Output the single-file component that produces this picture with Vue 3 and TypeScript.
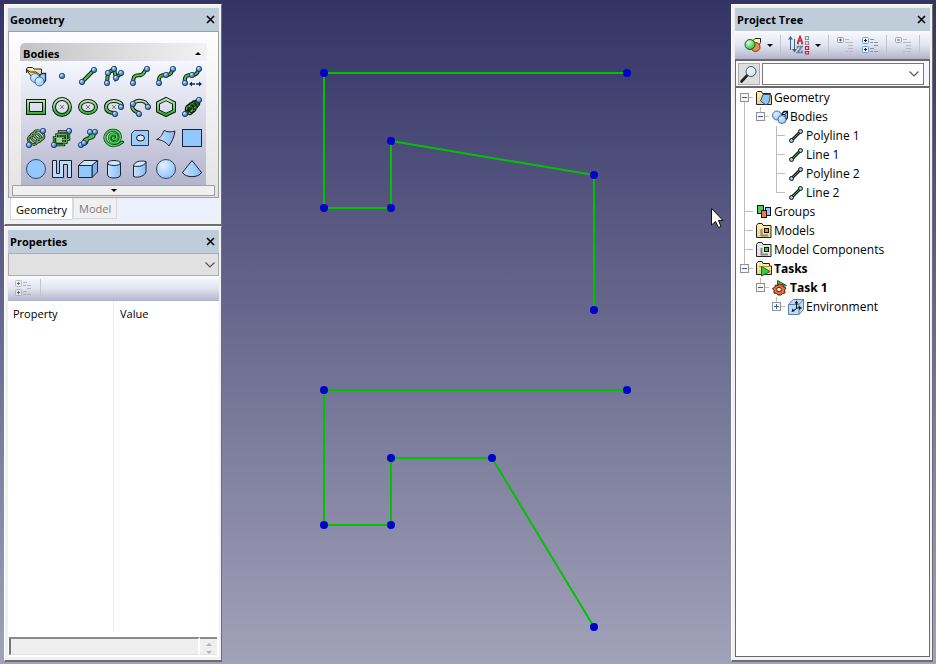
<script setup lang="ts">
import { ref, computed } from 'vue'

interface Tool { id: string; label: string }
interface TreeRow {
  label: string
  icon: string
  cells: string[]
  toggle?: '+' | '-'
  bold?: boolean
}
interface Point { x: number; y: number }

const tools: Tool[] = [
  { id: 'import', label: 'Import bodies' },
  { id: 'point', label: 'Point' },
  { id: 'line', label: 'Line' },
  { id: 'polyline', label: 'Polyline' },
  { id: 'curve', label: 'Curve' },
  { id: 'spline', label: 'Spline' },
  { id: 'spline-len', label: 'Spline by length' },
  { id: 'rect-wire', label: 'Rectangle wire' },
  { id: 'circle-wire', label: 'Circle wire' },
  { id: 'ellipse-wire', label: 'Ellipse wire' },
  { id: 'arc', label: 'Arc' },
  { id: 'arc3', label: 'Three point arc' },
  { id: 'hexagon', label: 'Polygon' },
  { id: 'coil-dark', label: 'Conical helix' },
  { id: 'coil', label: 'Helix' },
  { id: 'coil-rect', label: 'Rectangular helix' },
  { id: 'twist', label: 'Twisted wires' },
  { id: 'spiral', label: 'Spiral' },
  { id: 'plate', label: 'Plate with hole' },
  { id: 'surface', label: 'Surface' },
  { id: 'rect', label: 'Rectangle' },
  { id: 'disc', label: 'Disc' },
  { id: 'meander', label: 'Meander' },
  { id: 'box', label: 'Box' },
  { id: 'cylinder', label: 'Cylinder' },
  { id: 'oblique', label: 'Oblique cylinder' },
  { id: 'sphere', label: 'Sphere' },
  { id: 'cone', label: 'Cone' },
]

const rows: TreeRow[] = [
  { label: 'Geometry', icon: 't-geometry', cells: ['down'], toggle: '-' },
  { label: 'Bodies', icon: 't-bodies', cells: ['line', 'up'], toggle: '-' },
  { label: 'Polyline 1', icon: 't-line', cells: ['line', 'none', 'tee'] },
  { label: 'Line 1', icon: 't-line', cells: ['line', 'none', 'tee'] },
  { label: 'Polyline 2', icon: 't-line', cells: ['line', 'none', 'tee'] },
  { label: 'Line 2', icon: 't-line', cells: ['line', 'none', 'up'] },
  { label: 'Groups', icon: 't-groups', cells: ['tee'] },
  { label: 'Models', icon: 't-models', cells: ['tee'] },
  { label: 'Model Components', icon: 't-components', cells: ['tee'] },
  { label: 'Tasks', icon: 't-tasks', cells: ['up'], toggle: '-', bold: true },
  { label: 'Task 1', icon: 't-task', cells: ['none', 'up'], toggle: '-', bold: true },
  { label: 'Environment', icon: 't-env', cells: ['none', 'none', 'up'], toggle: '+' },
]

const bodies: Point[][] = [
  [
    { x: 627, y: 73 }, { x: 324, y: 73 }, { x: 324, y: 208 }, { x: 391, y: 208 },
    { x: 391, y: 141 }, { x: 594, y: 175 }, { x: 594, y: 310 },
  ],
  [
    { x: 627, y: 390 }, { x: 324, y: 390 }, { x: 324, y: 525 }, { x: 391, y: 525 },
    { x: 391, y: 458 }, { x: 492, y: 458 }, { x: 594, y: 627 },
  ],
]
const paths = computed(() => bodies.map(b => b.map(p => `${p.x},${p.y}`).join(' ')))
const nodes = computed(() => bodies.flat())

const tab = ref<'Geometry' | 'Model'>('Geometry')
const search = ref('')
</script>

<template>
  <div class="app">
    <svg class="sprite" width="0" height="0" aria-hidden="true">
      <defs>
        <radialGradient id="ball" cx=".35" cy=".3" r=".7">
          <stop offset="0" stop-color="#dcebff" /><stop offset=".5" stop-color="#6ba2e0" /><stop offset="1" stop-color="#2b5fa8" />
        </radialGradient>
        <radialGradient id="sph" cx=".35" cy=".3" r=".75">
          <stop offset="0" stop-color="#e2f1ff" /><stop offset="1" stop-color="#8cc3fb" />
        </radialGradient>
        <radialGradient id="gball" cx=".35" cy=".3" r=".7">
          <stop offset="0" stop-color="#d8ffd8" /><stop offset="1" stop-color="#2fc43c" />
        </radialGradient>
        <linearGradient id="green" gradientUnits="userSpaceOnUse" x1="0" y1="2" x2="0" y2="20">
          <stop offset="0" stop-color="#d2efcf" /><stop offset="1" stop-color="#12ae12" />
        </linearGradient>
        <linearGradient id="blue" x1="0" y1="0" x2="1" y2="0">
          <stop offset="0" stop-color="#c8e2ff" /><stop offset="1" stop-color="#86bdf7" />
        </linearGradient>
        <linearGradient id="folder" x1="0" y1="0" x2="0" y2="1">
          <stop offset="0" stop-color="#fff2b4" /><stop offset="1" stop-color="#f3cf72" />
        </linearGradient>
        <circle id="b" r="2.700" fill="url(#ball)" stroke="#16335e" stroke-width=".8" />
        <path id="x" d="M-2-2 2 2M2-2-2 2" stroke="#777" fill="none" />
      </defs>

      <symbol id="import" viewBox="0 0 22 22">
        <path d="M1.500 8V3.500L3 2.500h4.500L9 4h7.500v5" fill="url(#folder)" stroke="#222" />
        <path d="M1.500 4.500 5.500 10.500h10L11 7H5.500z" fill="url(#folder)" stroke="#222" />
        <path d="M14.500 10.500 17 8.500h3.500v7L18.500 18h-4z" fill="#a6d0fb" stroke="#17365d" stroke-width="1.400" />
        <circle cx="10" cy="13" r="4.500" fill="url(#sph)" stroke="#4f7fb4" />
        <circle cx="14.500" cy="16.500" r="4.500" fill="url(#sph)" stroke="#3f6ca0" />
      </symbol>
      <symbol id="point" viewBox="0 0 22 22"><use href="#b" x="11" y="11" /></symbol>
      <symbol id="line" viewBox="0 0 22 22">
        <path class="k" d="M5 17 17 5" /><path class="g" d="M5 17 17 5" />
        <use href="#b" x="5" y="17" /><use href="#b" x="17" y="5" />
      </symbol>
      <symbol id="polyline" viewBox="0 0 22 22">
        <path class="k" d="M4 17 5 8 11 4 13 13 19 7" /><path class="g" d="M4 17 5 8 11 4 13 13 19 7" />
        <use href="#b" x="4" y="18" /><use href="#b" x="5" y="8" /><use href="#b" x="11" y="4" /><use href="#b" x="13" y="13" /><use href="#b" x="18" y="8" />
      </symbol>
      <symbol id="curve" viewBox="0 0 22 22">
        <path class="k" d="M4 18C4 8 9 11 12 10 16 9 15 5 18 4" /><path class="g" d="M4 18C4 8 9 11 12 10 16 9 15 5 18 4" />
        <use href="#b" x="4" y="18" /><use href="#b" x="18" y="4" />
      </symbol>
      <symbol id="spline" viewBox="0 0 22 22">
        <path class="k" d="M4 18C3 10 7 10 11 10S17 9 17 4" /><path class="g" d="M4 18C3 10 7 10 11 10S17 9 17 4" />
        <use href="#b" x="4" y="18" /><use href="#b" x="11" y="10" /><use href="#b" x="18" y="4" />
      </symbol>
      <symbol id="spline-len" viewBox="0 0 22 22">
        <path class="k" d="M4 17C3 10 7 10 11 10S17 9 17 4" /><path class="g" d="M4 17C3 10 7 10 11 10S17 9 17 4" />
        <use href="#b" x="4" y="18" /><use href="#b" x="11" y="10" /><use href="#b" x="18" y="4" />
        <path d="M11 19h7" stroke="#102c5c" stroke-width="1.500" stroke-dasharray="3 1" />
        <path d="M8 19l3-2.500v5zM21 19l-3-2.500v5z" fill="#102c5c" />
      </symbol>
      <symbol id="rect-wire" viewBox="0 0 22 22">
        <rect class="k" x="3" y="5" width="16" height="12" /><rect class="g grad" x="3" y="5" width="16" height="12" />
      </symbol>
      <symbol id="circle-wire" viewBox="0 0 22 22">
        <circle class="k" cx="11" cy="11" r="8" /><circle class="g grad" cx="11" cy="11" r="8" /><use href="#x" x="11" y="11" />
      </symbol>
      <symbol id="ellipse-wire" viewBox="0 0 22 22">
        <ellipse class="k" cx="11" cy="11" rx="8" ry="6" /><ellipse class="g grad" cx="11" cy="11" rx="8" ry="6" /><use href="#x" x="11" y="11" />
      </symbol>
      <symbol id="arc" viewBox="0 0 22 22">
        <path class="k" d="M12 17C5 17 3 14 3 11 3 7 7 5 11 5s8 2 8 5" /><path class="g grad" d="M12 17C5 17 3 14 3 11 3 7 7 5 11 5s8 2 8 5" />
        <use href="#x" x="11" y="11" /><use href="#b" x="12" y="18" /><use href="#b" x="18" y="11" />
      </symbol>
      <symbol id="arc3" viewBox="0 0 22 22">
        <path class="k" d="M11 17C4 16 2 11 4 8 7 4 16 3 19 10" /><path class="g grad" d="M11 17C4 16 2 11 4 8 7 4 16 3 19 10" />
        <use href="#b" x="4" y="8" /><use href="#b" x="10" y="18" /><use href="#b" x="19" y="11" />
      </symbol>
      <symbol id="hexagon" viewBox="0 0 22 22">
        <path class="k" d="M11 3 19 7v8l-8 4L3 15V7z" /><path class="g grad" d="M11 3 19 7v8l-8 4L3 15V7z" />
      </symbol>
      <symbol id="coil-dark" viewBox="0 0 22 22">
        <path d="M4 18 18 4" stroke="#0a4c0a" stroke-width="4" />
        <g fill="none" stroke="#0b1f0b" stroke-width="1.600">
          <ellipse cx="8.500" cy="13.500" rx="4" ry="5" /><ellipse cx="11" cy="11.500" rx="4" ry="5" /><ellipse cx="13.500" cy="9" rx="3.500" ry="4" /><ellipse cx="16" cy="7" rx="2.500" ry="3" />
        </g>
        <g fill="none" stroke="#36a936" stroke-width=".8">
          <path d="M6 11c3-3 6 0 6 4M9 9c3-3 6 0 6 4M12 7c2-2 5 0 5 3" />
        </g>
        <use href="#b" x="4" y="18" /><use href="#b" x="18" y="4" />
      </symbol>
      <symbol id="coil" viewBox="0 0 22 22">
        <g fill="none" stroke="#12240f" stroke-width="2.600">
          <ellipse cx="8" cy="13" rx="5" ry="4" transform="rotate(35 8 13)" /><ellipse cx="11" cy="10.500" rx="5.500" ry="4" transform="rotate(35 11 10.500)" /><ellipse cx="14" cy="8" rx="5.500" ry="4" transform="rotate(35 14 8)" />
        </g>
        <g fill="none" stroke="#6fbf68" stroke-width="1">
          <ellipse cx="8" cy="13" rx="5" ry="4" transform="rotate(35 8 13)" /><ellipse cx="11" cy="10.500" rx="5.500" ry="4" transform="rotate(35 11 10.500)" /><ellipse cx="14" cy="8" rx="5.500" ry="4" transform="rotate(35 14 8)" />
        </g>
        <use href="#b" x="4" y="18" /><use href="#b" x="18" y="4" />
      </symbol>
      <symbol id="coil-rect" viewBox="0 0 22 22">
        <g fill="none" stroke="#12240f" stroke-width="2.400"><path d="M8 4.500h10v8H8zM5.500 7.500h10v8h-10zM3 10.500h10V18H3z" /></g>
        <g fill="none" stroke="#5cb955" stroke-width="1"><path d="M8 4.500h10v8H8zM5.500 7.500h10v8h-10zM3 10.500h10V18H3z" /></g>
        <path d="M6 11h5v4H6z" fill="#b9c4ba" />
        <use href="#b" x="3" y="18" /><use href="#b" x="18" y="4" />
      </symbol>
      <symbol id="twist" viewBox="0 0 22 22">
        <path class="k" d="M4 18C8 17 6 12 10 12S14 6 17 5M7 16C10 18 9 11 12 11S17 10 17 6" />
        <path class="g" d="M4 18C8 17 6 12 10 12S14 6 17 5M7 16C10 18 9 11 12 11S17 10 17 6" />
        <use href="#b" x="4" y="18" /><use href="#b" x="7" y="16" /><use href="#b" x="13" y="5" /><use href="#b" x="18" y="5" />
      </symbol>
      <symbol id="spiral" viewBox="0 0 22 22">
        <path fill="none" stroke="#123f16" stroke-width="3" stroke-linecap="round" d="M11.500 10.500c-2-1-3 1.500-.5 2 4 .5 4-5 0-5.500-6-.5-6 8.500.5 9 7 0 8-10 1-12.500C4 2-1 10 4 15.500c4 4.500 10 4 15.500-.5" />
        <path fill="none" stroke="#3fdc4a" stroke-width="1.600" d="M11.500 10.500c-2-1-3 1.500-.5 2 4 .5 4-5 0-5.500-6-.5-6 8.500.5 9 7 0 8-10 1-12.500C4 2-1 10 4 15.500c4 4.500 10 4 15.500-.5" />
      </symbol>
      <symbol id="plate" viewBox="0 0 22 22">
        <path d="M5.500 3.500h14v15h-17v-12z" fill="#9accfb" stroke="#26384c" />
        <ellipse cx="11.500" cy="11" rx="4" ry="3" fill="#e4e4f0" stroke="#111" />
      </symbol>
      <symbol id="surface" viewBox="0 0 22 22">
        <path d="M1.500 12.500C6 11 8 6 9 3.500c4 2 8 1.500 11 .5-.5 6-3.500 11-6 15-3-4-8-6.500-12.500-6.500z" fill="url(#blue)" stroke="#222" />
      </symbol>
      <symbol id="rect" viewBox="0 0 22 22"><rect x="1.500" y="2.500" width="19" height="17" fill="#93c8fd" stroke="#16233a" /></symbol>
      <symbol id="disc" viewBox="0 0 22 22"><circle cx="11" cy="11" r="9.500" fill="#93c8fd" stroke="#33485f" /></symbol>
      <symbol id="meander" viewBox="0 0 22 22">
        <path d="M1.500 2.500h4v13h3v-13h12v17h-4v-13h-4v13h-11z" fill="#b9dcff" stroke="#1b1f28" />
      </symbol>
      <symbol id="box" viewBox="0 0 22 22">
        <g stroke="#1c2430" stroke-linejoin="round"><path d="M1.500 7.500 7 2.500h13.500L15 7.500z" fill="#cbe5ff" /><path d="M15 7.500l5.500-5V14L15 19.500z" fill="#78b3ee" /><path d="M1.500 7.500H15v12H1.500z" fill="#93c8fd" /></g>
      </symbol>
      <symbol id="cylinder" viewBox="0 0 22 22">
        <g stroke="#1c2430"><path d="M4.500 5v12c0 4 13 4 13 0V5" fill="url(#blue)" /><ellipse cx="11" cy="5" rx="6.500" ry="2.500" fill="#cfe7ff" /></g>
      </symbol>
      <symbol id="oblique" viewBox="0 0 22 22">
        <g stroke="#1c2430"><path d="M4.500 8v10.500c5 2 12-1 12.500-5V4z" fill="url(#blue)" /><path d="M4.500 8C5 4 11 2 17 3.500 17 7 10 9.500 4.500 8z" fill="#cfe7ff" /></g>
      </symbol>
      <symbol id="sphere" viewBox="0 0 22 22"><circle cx="11" cy="11" r="9.500" fill="url(#sph)" stroke="#33485f" /></symbol>
      <symbol id="cone" viewBox="0 0 22 22"><path d="M11 2.500 1.500 14.500C4 20 18 20 20.500 14.500z" fill="url(#blue)" stroke="#1c2430" /></symbol>

      <symbol id="t-geometry" viewBox="0 0 16 16">
        <path d="M.5 14.500v-12l1-1h4l1 2h8v2h1v9z" fill="url(#folder)" stroke="#222" />
        <path d="M7 4.500h7.500l-1.500 8-3 2.500-5.500-4z" fill="#92c4f6" stroke="#35506f" />
      </symbol>
      <symbol id="t-bodies" viewBox="0 0 16 16">
        <path d="M9.500 5.500 12 2.500h3.500v6l-3 4h-3z" fill="#a6d0fb" stroke="#0f1c2c" stroke-width="1.300" /><path d="M10 5.500h3v6M13 5.500l2.500-3" fill="none" stroke="#0f1c2c" />
        <circle cx="5" cy="6.500" r="4.500" fill="url(#sph)" stroke="#45719f" /><circle cx="10" cy="10.500" r="4" fill="url(#sph)" stroke="#45719f" />
      </symbol>
      <symbol id="t-line" viewBox="0 0 16 16">
        <path d="M4 12 12 4" stroke="#111" stroke-width="3" /><path d="M4 12 12 4" stroke="#3fb53f" />
        <circle cx="3.500" cy="12.500" r="2" fill="#9cc6f2" stroke="#111" /><circle cx="12.500" cy="3.500" r="2" fill="#9cc6f2" stroke="#111" />
      </symbol>
      <symbol id="t-groups" viewBox="0 0 16 16">
        <rect x="1.500" y="1.500" width="6" height="8" fill="#4bcf5a" stroke="#111" /><rect x="9.500" y="3.500" width="5" height="8" fill="#93c8fd" stroke="#111" /><rect x="5.500" y="6.500" width="5" height="7" fill="#f47a3c" stroke="#111" />
      </symbol>
      <symbol id="t-models" viewBox="0 0 16 16">
        <path d="M.5 14.500v-12l1.500-2h4l1 2h8v12z" fill="url(#folder)" stroke="#222" /><path d="M5.500 6v6.500H12" fill="none" stroke="#8a8a8a" stroke-width="2" /><rect x="8.500" y="5.500" width="4" height="4" fill="#f47a3c" stroke="#111" />
      </symbol>
      <symbol id="t-components" viewBox="0 0 16 16">
        <path d="M.5 14.500v-12l1.500-2h4l1 2h8v12z" fill="#e4e4e4" stroke="#222" /><path d="M5.500 6v6.500H12" fill="none" stroke="#8a8a8a" stroke-width="2" /><rect x="8.500" y="5.500" width="4" height="4" fill="#1fd13a" stroke="#111" />
      </symbol>
      <symbol id="t-tasks" viewBox="0 0 16 16">
        <path d="M.5 13.500v-11l1.500-2h4l1 2h6.500v2.500h2v8.500z" fill="url(#folder)" stroke="#222" /><path d="M3 5.500h12" stroke="#b39248" /><path d="M5.500 5.500v9.500L14 10.500z" fill="#2bd344" stroke="#0c6a1c" />
      </symbol>
      <symbol id="t-task" viewBox="0 0 16 16">
        <path d="M5.500.5v8l9-3z" fill="#2bd344" stroke="#0c6a1c" />
        <path d="M7 3.500l1.500 1.500 2.500-.5.500 2.500 2.500 1-1.500 2 .5 3-2.500.5L9 15H6L4.500 13.500 2 13v-2.500L.5 8.500 3 7l.5-2 2.500.5z" fill="#f06a35" stroke="#56200c" /><circle cx="7" cy="9.500" r="2.300" fill="#fff" stroke="#56200c" />
      </symbol>
      <symbol id="t-env" viewBox="0 0 16 16">
        <path d="M.5 5.500 5 .5h10.500v10l-4.500 5H.5zM.5 5.500H11v10M11 5.500l4.500-5" fill="#bcdcfb" stroke="#5a7fa8" /><path d="M8.500 3v7M8.500 9.500 12 8M8.500 9.500 5 12" stroke="#111" /><path d="M8.500 1.500l-2 3h4zM14 9l-3-2v4zM3.500 13l1-3.500 2.500 2.500z" fill="#111" />
      </symbol>

      <symbol id="view" viewBox="0 0 18 16">
        <path d="M8 4.500 11 1.500h5.500v4L14 9.500H8z" fill="#fff0ae" stroke="#222" /><circle cx="11.500" cy="10" r="4.500" fill="#f08a52" stroke="#7c3a1b" /><circle cx="6" cy="7.500" r="5" fill="url(#gball)" stroke="#145c1c" />
      </symbol>
      <symbol id="sort" viewBox="0 0 22 20">
        <path d="M2.500 2v13M6.500 4v12" stroke="#41618c" /><path d="M0 4.500l2.500-3.500L5 4.500zM4 14l2.500 3.500L9 14z" fill="#41618c" />
        <path d="M9 8.500h2M13 8.500h2M9.500 8 12 1.500 14.500 8M10.500 6h3" fill="none" stroke="#cf2436" stroke-width="1.600" />
        <path d="M9.500 13.500v-2h4.500L9.500 17.500H14V15.500" fill="none" stroke="#6d7fa0" stroke-width="1.600" />
        <g fill="none" stroke-width="1.200"><path d="M17.500 1.500h3v3h-3zM17.500 6.500h3v3h-3z" stroke="#8390a8" /><path d="M17.500 11.500h3v3h-3zM17.500 16.500h3v2.500h-3z" stroke="#cf2436" /></g>
      </symbol>
      <symbol id="expand-one" viewBox="0 0 16 17">
        <rect x=".5" y=".5" width="6" height="5" rx="1" fill="#eef0f5" stroke="#9aa3b8" /><path d="M2 3h3M3.500 1.500v3" stroke="#596580" /><path d="M8 2.500h4M8 5.500h8M11 8.500h5M11 11.500h5M8 14.500h3M12 14.500h4" stroke="#b5b8c4" />
      </symbol>
      <symbol id="expand-all" viewBox="0 0 16 17">
        <g class="boxes"><rect x=".5" y=".5" width="6" height="6" rx="1" /><rect x=".5" y="9.500" width="6" height="6" rx="1" /></g>
        <path class="plus" d="M2 3.500h3M3.500 2v3M2 12.500h3M3.500 11v3" /><path class="bars" d="M8 2.500h4M8 5.500h3M12 5.500h4M12 8.500h4M8 11.500h4M8 14.500h3M12 14.500h4" />
      </symbol>
      <symbol id="collapse" viewBox="0 0 16 17">
        <rect x=".5" y=".5" width="6" height="5" rx="1" fill="#eef0f5" stroke="#9aa3b8" /><path d="M2 3h3" stroke="#596580" /><path d="M8 2.500h4M8 5.500h8M11 8.500h5M11 11.500h5M8 14.500h3M12 14.500h4" stroke="#b5b8c4" />
      </symbol>
      <symbol id="magnify" viewBox="0 0 18 18">
        <path d="M1.500 16.500 7 10.500" stroke="#222" stroke-width="2.600" stroke-linecap="round" /><circle cx="11" cy="6.500" r="5" fill="#dcecfb" stroke="#4a5666" /><path d="M8 6a3 3 0 0 1 3-3" fill="none" stroke="#fff" />
      </symbol>
      <symbol id="close" viewBox="0 0 9 9"><path d="M1 1l7 7M8 1 1 8" stroke="#000" stroke-width="1.600" /></symbol>
      <symbol id="chev" viewBox="0 0 10 6"><path d="M.5.5 5 5 9.500.5" fill="none" stroke="#555" stroke-width="1.200" /></symbol>
    </svg>

    <aside class="side left">
      <section class="panel" aria-label="Geometry">
        <header class="title"><h2>Geometry</h2><button class="close" aria-label="Close Geometry"><svg><use href="#close" /></svg></button></header>
        <div class="toolbox">
          <div class="group">
            <button class="group-head"><span>Bodies</span><i class="tri up"></i></button>
            <div class="tools">
              <button v-for="t in tools" :key="t.id" :aria-label="t.label"><svg><use :href="'#' + t.id" /></svg></button>
            </div>
          </div>
          <button class="scroller" aria-label="Scroll down"><i class="tri down"></i></button>
        </div>
        <div class="tabs" role="tablist">
          <button role="tab" :aria-selected="tab === 'Geometry'" @click="tab = 'Geometry'">Geometry</button>
          <button role="tab" :aria-selected="tab === 'Model'" @click="tab = 'Model'">Model</button>
        </div>
      </section>

      <section class="panel grow" aria-label="Properties">
        <header class="title"><h2>Properties</h2><button class="close" aria-label="Close Properties"><svg><use href="#close" /></svg></button></header>
        <div class="picker">
          <select aria-label="Object" disabled><option></option></select>
          <svg class="chev"><use href="#chev" /></svg>
        </div>
        <div class="bar props-bar">
          <button class="tb" aria-label="Expand all properties"><svg><use href="#expand-all" /></svg></button>
          <i class="sep"></i>
        </div>
        <table class="props">
          <thead><tr><th scope="col">Property</th><th scope="col">Value</th></tr></thead>
          <tbody><tr><td></td><td></td></tr></tbody>
        </table>
        <div class="hint">
          <textarea aria-label="Description" readonly></textarea>
          <div class="spin"><i class="tri up"></i><i class="tri down"></i></div>
        </div>
      </section>
    </aside>

    <main class="canvas">
      <svg viewBox="222 0 509 664" role="img" aria-label="Polylines">
        <g fill="none" stroke="#00c300" stroke-width="2"><polyline v-for="p in paths" :key="p" :points="p" /></g>
        <g fill="#0000cd"><circle v-for="(n, i) in nodes" :key="i" :cx="n.x" :cy="n.y" r="4" /></g>
        <path d="M711.500 208.500v16.500l4-3.500 3 6 2.500-1-2.500-6h4.500z" fill="#fff" stroke="#111" />
      </svg>
    </main>

    <aside class="side right">
      <section class="panel grow" aria-label="Project Tree">
        <header class="title"><h2>Project Tree</h2><button class="close" aria-label="Close Project Tree"><svg><use href="#close" /></svg></button></header>
        <div class="bar tree-bar">
          <button class="tb wide" aria-label="View"><svg class="i-view"><use href="#view" /></svg><i class="tri down"></i></button>
          <i class="sep"></i>
          <button class="tb wide" aria-label="Sort"><svg class="i-sort"><use href="#sort" /></svg><i class="tri down"></i></button>
          <i class="sep"></i>
          <button class="tb" aria-label="Expand"><svg><use href="#expand-one" /></svg></button>
          <button class="tb" aria-label="Expand all"><svg><use href="#expand-all" /></svg></button>
          <i class="sep"></i>
          <button class="tb" aria-label="Collapse"><svg><use href="#collapse" /></svg></button>
          <i class="sep"></i>
        </div>
        <form class="search" @submit.prevent>
          <button class="find" aria-label="Find"><svg><use href="#magnify" /></svg></button>
          <div class="field">
            <input v-model="search" type="text" aria-label="Search the tree" />
            <button type="button" aria-label="Search history"><svg class="chev"><use href="#chev" /></svg></button>
          </div>
        </form>
        <ul class="tree" role="tree">
          <li v-for="r in rows" :key="r.label" role="treeitem" :aria-level="r.cells.length" :class="{ bold: r.bold }">
            <span v-for="(c, i) in r.cells" :key="i" class="cell" :class="c">
              <button v-if="r.toggle && i === r.cells.length - 1" class="toggle" :class="{ plus: r.toggle === '+' }" :aria-label="'Toggle ' + r.label"></button>
            </span>
            <svg class="icon"><use :href="'#' + r.icon" /></svg>
            <span class="label">{{ r.label }}</span>
          </li>
        </ul>
      </section>
    </aside>
  </div>
</template>

<style>
body { margin: 0; }
</style>

<style scoped>
* { box-sizing: border-box; }
.app {
  display: grid;
  grid-template-columns: 222px minmax(0, 1fr) 205px;
  grid-template-rows: minmax(0, 1fr);
  height: 100vh;
  background: linear-gradient(#333366, #a2a2ba);
  font: 12px/16px "Open Sans", "Noto Sans", sans-serif;
  color: #000;
}
.sprite { display: block; position: absolute; }
.k { fill: none; stroke: #141c14; stroke-width: 4; }
.g { fill: none; stroke: #4cc04c; stroke-width: 2; }
.grad { stroke: url(#green); }
.boxes { fill: #e6f2ff; stroke: #6b9fd4; }
.plus { stroke: #111; }
.bars { stroke: #8d929f; }
button { font: inherit; color: inherit; border: 0; padding: 0; margin: 0; background: none; }
svg { display: block; }

.side { display: flex; flex-direction: column; min-height: 0; padding: 4px 0 2px; }
.left { padding-left: 4px; }
.right { padding-right: 3px; }
.panel {
  display: flex;
  flex-direction: column;
  padding: 3px 2px 3px 3px;
  background: #f1f1f1;
  border: 1px solid #fff;
  border-right-color: #6d6d72;
  border-bottom: 2px solid #6d6d72;
}
.grow { flex: 1; min-height: 0; }
.title {
  display: flex;
  align-items: center;
  justify-content: space-between;
  height: 23px;
  padding: 0 4px 0 2px;
  background: #bfcddb;
}
.title h2 { margin: 0; font-size: 11px; font-weight: 700; }
.close svg { width: 9px; height: 9px; }

.tri { display: block; width: 0; height: 0; border: 3px solid transparent; }
.tri.down { border-top-color: #000; border-bottom-width: 0; }
.tri.up { border-bottom-color: #000; border-top-width: 0; }

.toolbox {
  display: flex;
  flex-direction: column;
  padding: 11px 3px 1px;
  border: 1px solid #a0a0a4;
  background: linear-gradient(#fdfdff, #e3e3e3);
}
.group { padding: 0 8px; }
.group-head {
  display: flex;
  align-items: center;
  justify-content: space-between;
  width: 100%;
  height: 18px;
  padding: 3px 6px 0 3px;
  font-size: 11px;
  font-weight: 700;
  border-top-left-radius: 5px;
  background: linear-gradient(90deg, #c3c3c3, #f2f2f2);
}
.tools {
  display: grid;
  grid-template-columns: repeat(7, 26px);
  grid-auto-rows: 31px;
  justify-content: center;
  margin: 0 1px;
  background: linear-gradient(#f5f8ff, #b4b4cd);
}
.tools button { display: grid; place-items: start center; padding-top: 4px; }
.tools svg { width: 22px; height: 22px; }
.scroller {
  display: grid;
  place-items: center;
  height: 11px;
  border: 1px solid #a0a0a0;
  background: #f0f0f0;
}
.tabs {
  display: flex;
  align-items: flex-start;
  height: 23px;
  padding: 0 2px;
  background: #eceffc;
}
.tabs button {
  height: 21px;
  padding: 1px 5px 0;
  border: 1px solid #d9d9d9;
  border-top: 0;
  background: #f0f0f0;
  color: #7b7b7b;
  font-size: 11px;
}
.tabs button[aria-selected="true"] { height: 22px; padding-top: 2px; background: #fff; color: #000; }

.picker { display: grid; align-items: center; height: 23px; }
.picker select {
  grid-area: 1 / 1;
  width: 100%;
  height: 100%;
  appearance: none;
  border: 1px solid #acacac;
  border-radius: 0;
  background: #e1e1e1;
  opacity: 1;
}
.picker .chev { grid-area: 1 / 1; justify-self: end; margin-right: 4px; }
.chev { width: 10px; height: 6px; }

.bar {
  display: flex;
  align-items: center;
  background: linear-gradient(#fafaff, #e2e4f0 50%, #b3b4cb);
}
.sep { width: 1px; height: 20px; background: #c4c4c8; }
.tb { padding: 0 1px; }
.tb svg { width: 16px; height: 17px; }
.props-bar { height: 25px; padding-left: 6px; gap: 8px; }
.props-bar .tb { opacity: .6; filter: grayscale(1); }
.tree-bar { height: 28px; padding-left: 9px; gap: 7px; }
.tb.wide { display: flex; align-items: center; gap: 5px; padding: 0; }
.tree-bar .i-view { width: 18px; height: 16px; }
.tree-bar .i-sort { width: 22px; height: 20px; }

.props {
  flex: 1;
  width: 100%;
  border-collapse: collapse;
  table-layout: fixed;
  background: #fff;
}
.props th { height: 26px; padding: 0 5px; text-align: left; font-size: 11px; font-weight: 400; }
.props th + th { padding-left: 6px; }
.props th:first-child, .props td:first-child { border-right: 1px solid #ececec; }
.hint {
  display: flex;
  flex: none;
  height: 25px;
  padding: 5px 2px 2px 1px;
  background: #fff;
}
.hint textarea {
  flex: 1;
  min-width: 0;
  resize: none;
  overflow: hidden;
  border: 2px solid #a0a0a0;
  border-color: #8c8c8c #fff #e3e3e3 #777;
  border-bottom-width: 1px;
  background: #efefef;
}
.spin {
  display: flex;
  flex-direction: column;
  align-items: center;
  justify-content: space-between;
  width: 17px;
  padding: 4px 0 0;
  border-top: 2px solid #8c8c8c;
  border-bottom: 1px solid #e3e3e3;
  background: #efefef;
}
.spin .up { border-bottom-color: #b4b4b4; }
.spin .down { border-top-color: #b4b4b4; }

.canvas { min-width: 0; min-height: 0; }
.canvas svg { width: 100%; height: 100%; }

.search {
  display: flex;
  gap: 2px;
  height: 27px;
  padding: 2px 5px 1px 2px;
  border: solid #6a6a6a;
  border-width: 2px 1px 0;
  background: #f7f7fc;
}
.find { display: grid; place-items: center; width: 22px; height: 22px; border: 1px solid #adadad; background: #dedede; }
.find svg { width: 18px; height: 18px; }
.field { display: flex; flex: 1; min-width: 0; height: 22px; border: 1px solid #7a7a7a; background: #fff; }
.field input { flex: 1; min-width: 0; border: 0; outline: 0; padding: 0 4px; font: inherit; background: none; }
.field button { display: grid; place-items: center; width: 18px; }

.tree {
  flex: 1;
  min-height: 0;
  margin: 0;
  padding: 0 0 0 1px;
  list-style: none;
  overflow: hidden;
  border: 1px solid #6a6a6a;
  border-top-width: 2px;
  background: #fff;
}
.tree li { display: flex; align-items: center; height: 19px; white-space: nowrap; }
.bold { font-weight: 700; }
.cell {
  flex: none;
  display: grid;
  place-items: center;
  width: 16px;
  height: 19px;
}
.cell.line { background: linear-gradient(#bdbdbd, #bdbdbd) 7px 0 / 1px 19px no-repeat; }
.cell.up { background: linear-gradient(#bdbdbd, #bdbdbd) 7px 0 / 1px 10px no-repeat, linear-gradient(#bdbdbd, #bdbdbd) 7px 9px / 9px 1px no-repeat; }
.cell.down { background: linear-gradient(#bdbdbd, #bdbdbd) 7px 9px / 1px 10px no-repeat, linear-gradient(#bdbdbd, #bdbdbd) 7px 9px / 9px 1px no-repeat; }
.cell.tee { background: linear-gradient(#bdbdbd, #bdbdbd) 7px 0 / 1px 19px no-repeat, linear-gradient(#bdbdbd, #bdbdbd) 7px 9px / 9px 1px no-repeat; }
.toggle {
  width: 9px;
  height: 9px;
  margin-right: 1px;
  border: 1px solid #919191;
  background: linear-gradient(#3c5aa0, #3c5aa0) center / 5px 1px no-repeat, #f6f6f6;
}
.toggle.plus { background: linear-gradient(#3c5aa0, #3c5aa0) center / 5px 1px no-repeat, linear-gradient(#3c5aa0, #3c5aa0) center / 1px 5px no-repeat, #f6f6f6; }
.icon { flex: none; width: 16px; height: 16px; margin: 0 2px 0 3px; }
</style>
